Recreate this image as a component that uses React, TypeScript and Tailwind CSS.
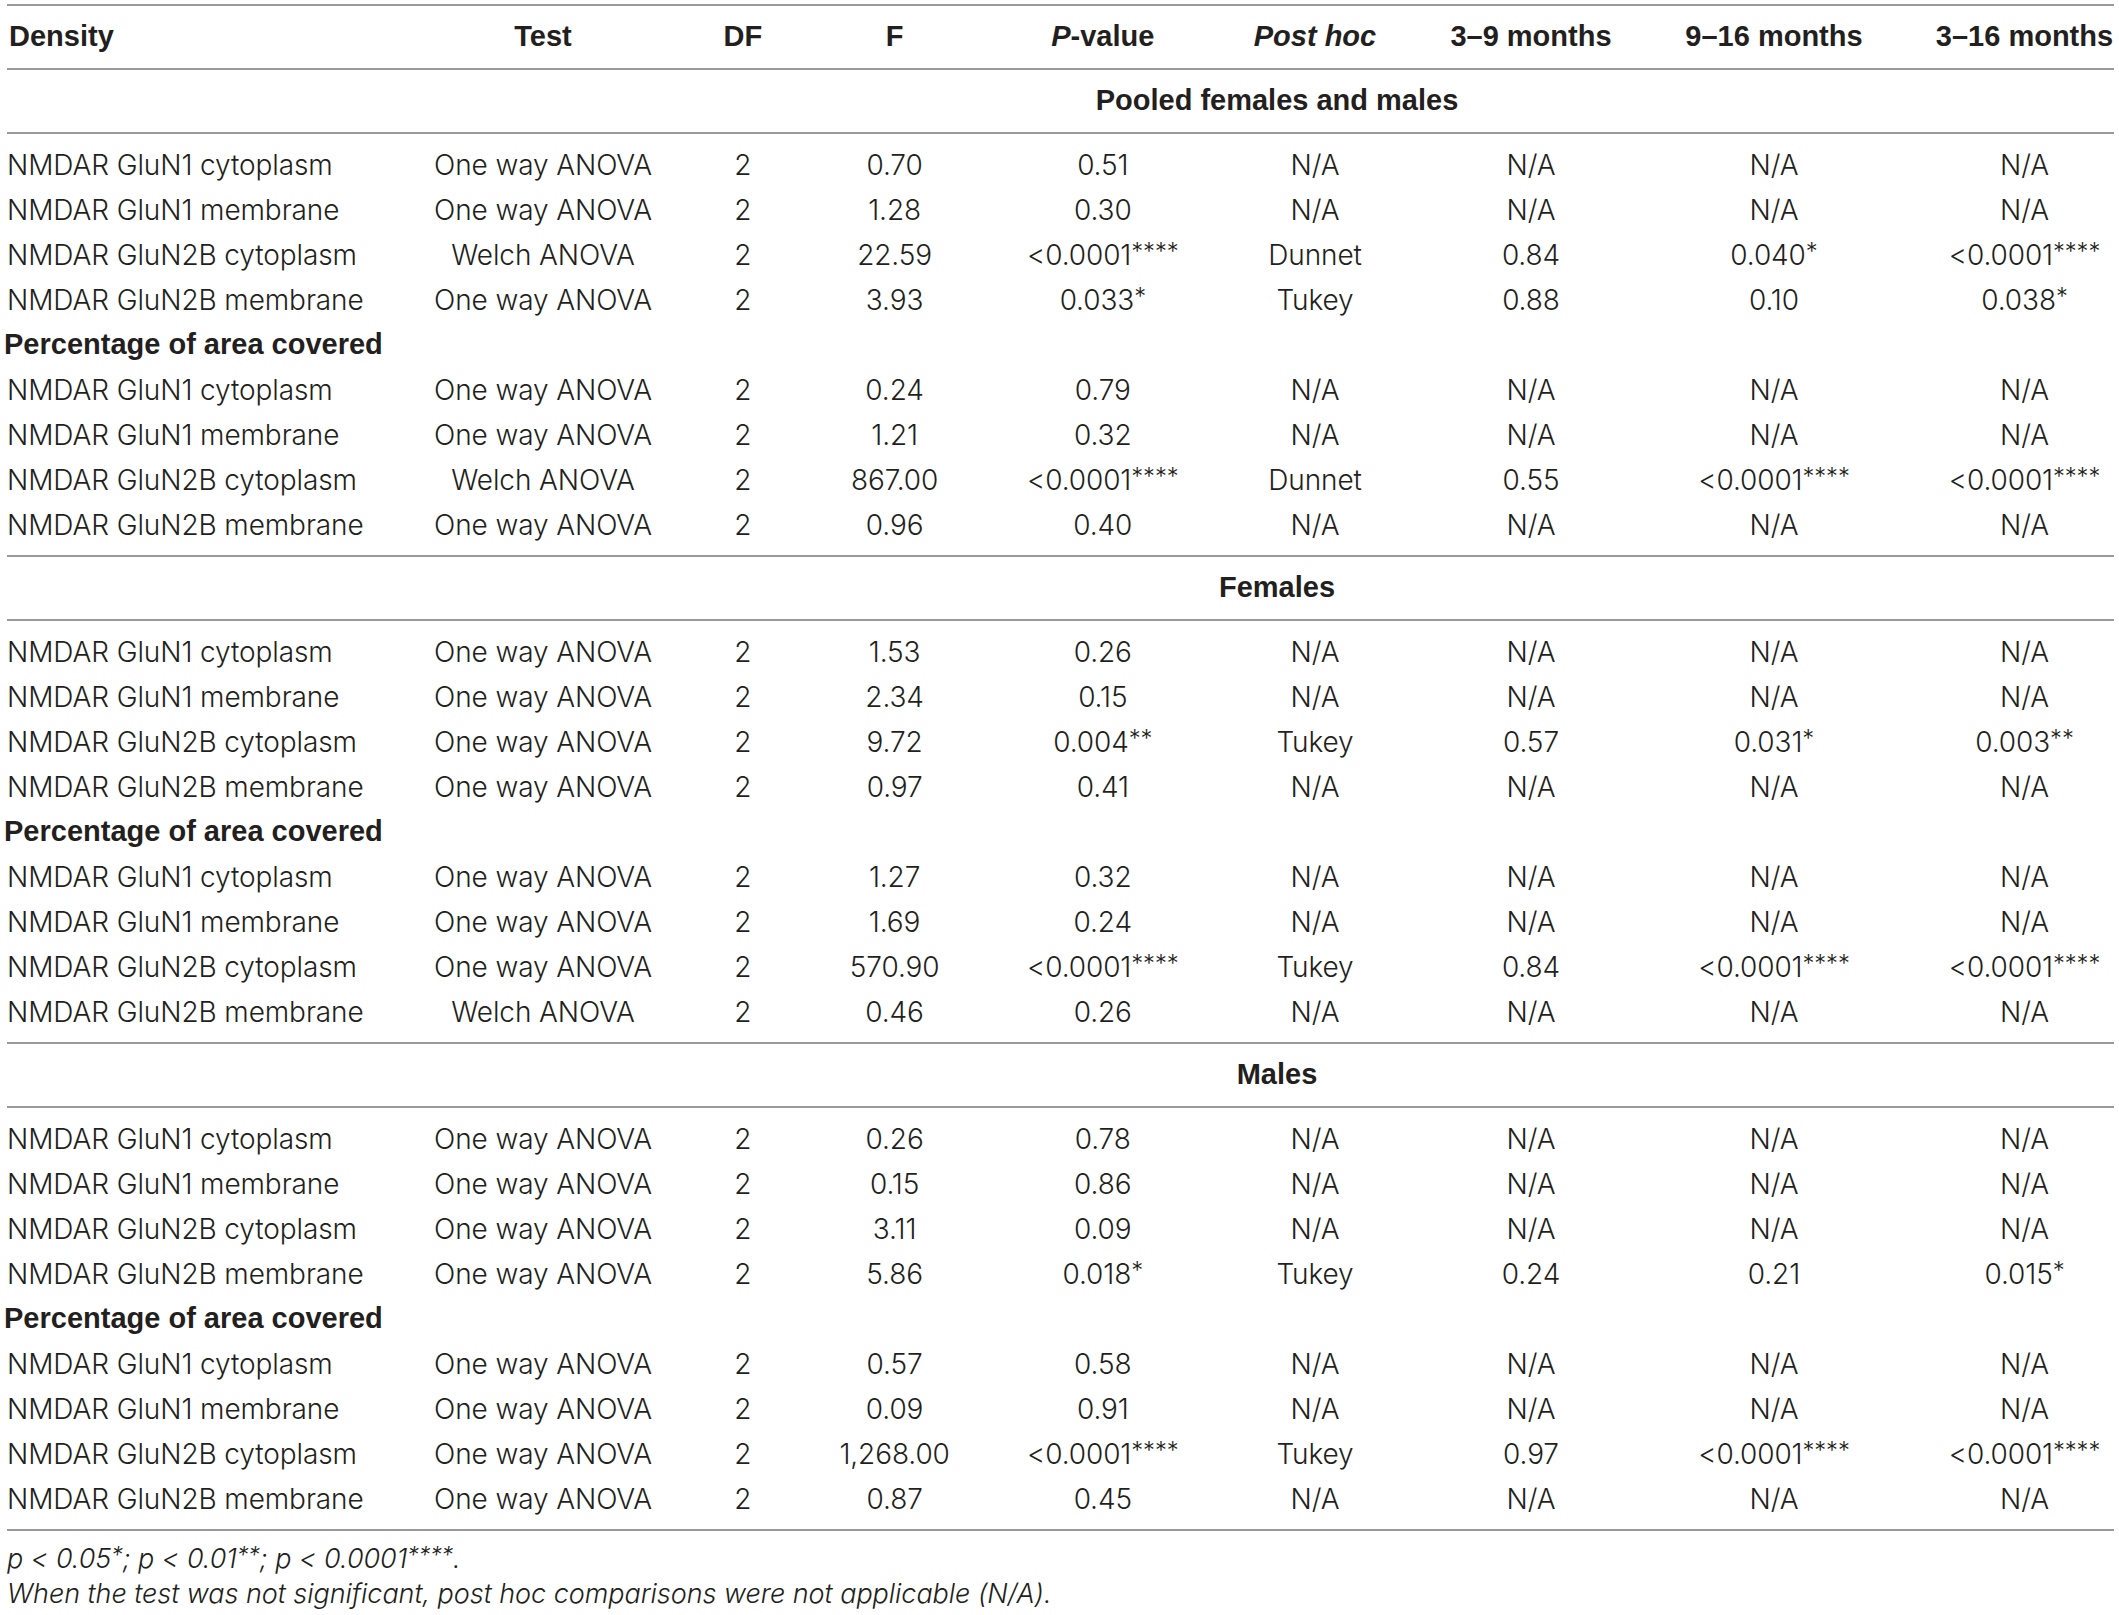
import React from "react";

type Row = string[];

const NA = ["N/A", "N/A", "N/A", "N/A"];

const sections: { title: string; density: Row[]; pct: Row[] }[] = [
  {
    title: "Pooled females and males",
    density: [
      ["NMDAR GluN1 cytoplasm", "One way ANOVA", "2", "0.70", "0.51", ...NA],
      ["NMDAR GluN1 membrane", "One way ANOVA", "2", "1.28", "0.30", ...NA],
      ["NMDAR GluN2B cytoplasm", "Welch ANOVA", "2", "22.59", "<0.0001****", "Dunnet", "0.84", "0.040*", "<0.0001****"],
      ["NMDAR GluN2B membrane", "One way ANOVA", "2", "3.93", "0.033*", "Tukey", "0.88", "0.10", "0.038*"],
    ],
    pct: [
      ["NMDAR GluN1 cytoplasm", "One way ANOVA", "2", "0.24", "0.79", ...NA],
      ["NMDAR GluN1 membrane", "One way ANOVA", "2", "1.21", "0.32", ...NA],
      ["NMDAR GluN2B cytoplasm", "Welch ANOVA", "2", "867.00", "<0.0001****", "Dunnet", "0.55", "<0.0001****", "<0.0001****"],
      ["NMDAR GluN2B membrane", "One way ANOVA", "2", "0.96", "0.40", ...NA],
    ],
  },
  {
    title: "Females",
    density: [
      ["NMDAR GluN1 cytoplasm", "One way ANOVA", "2", "1.53", "0.26", ...NA],
      ["NMDAR GluN1 membrane", "One way ANOVA", "2", "2.34", "0.15", ...NA],
      ["NMDAR GluN2B cytoplasm", "One way ANOVA", "2", "9.72", "0.004**", "Tukey", "0.57", "0.031*", "0.003**"],
      ["NMDAR GluN2B membrane", "One way ANOVA", "2", "0.97", "0.41", ...NA],
    ],
    pct: [
      ["NMDAR GluN1 cytoplasm", "One way ANOVA", "2", "1.27", "0.32", ...NA],
      ["NMDAR GluN1 membrane", "One way ANOVA", "2", "1.69", "0.24", ...NA],
      ["NMDAR GluN2B cytoplasm", "One way ANOVA", "2", "570.90", "<0.0001****", "Tukey", "0.84", "<0.0001****", "<0.0001****"],
      ["NMDAR GluN2B membrane", "Welch ANOVA", "2", "0.46", "0.26", ...NA],
    ],
  },
  {
    title: "Males",
    density: [
      ["NMDAR GluN1 cytoplasm", "One way ANOVA", "2", "0.26", "0.78", ...NA],
      ["NMDAR GluN1 membrane", "One way ANOVA", "2", "0.15", "0.86", ...NA],
      ["NMDAR GluN2B cytoplasm", "One way ANOVA", "2", "3.11", "0.09", ...NA],
      ["NMDAR GluN2B membrane", "One way ANOVA", "2", "5.86", "0.018*", "Tukey", "0.24", "0.21", "0.015*"],
    ],
    pct: [
      ["NMDAR GluN1 cytoplasm", "One way ANOVA", "2", "0.57", "0.58", ...NA],
      ["NMDAR GluN1 membrane", "One way ANOVA", "2", "0.09", "0.91", ...NA],
      ["NMDAR GluN2B cytoplasm", "One way ANOVA", "2", "1,268.00", "<0.0001****", "Tukey", "0.97", "<0.0001****", "<0.0001****"],
      ["NMDAR GluN2B membrane", "One way ANOVA", "2", "0.87", "0.45", ...NA],
    ],
  },
];

const GRID = "grid grid-cols-[358px_356px_43.6px_260px_156.4px_268px_164px_322px_179px]";

function Val({ v }: { v: string }) {
  const m = v.match(/^(.*?)(\*+)$/);
  if (!m) return <>{v}</>;
  return (
    <>
      {m[1]}
      <span className="relative -top-[0.2em] text-[0.85em]">{m[2]}</span>
    </>
  );
}

function DataRow({ row }: { row: Row }) {
  return (
    <div className={`${GRID} h-[45px] items-center`}>
      {row.map((c, i) =>
        i === 0 ? (
          <div key={i} className="whitespace-nowrap">
            {c}
          </div>
        ) : (
          <div key={i} className="flex justify-center whitespace-nowrap">
            <span>
              <Val v={c} />
            </span>
          </div>
        )
      )}
    </div>
  );
}

function Line() {
  return <div className="h-[2px] bg-[#9a9a9a]" />;
}

const BOLD = "font-['Liberation_Sans',Arial,sans-serif] font-bold text-[29px] tracking-normal";

export default function App() {
  const headers = ["Test", "DF", "F"];
  return (
    <div className="min-h-[1615px] bg-white pt-[4px] text-[#231f20] font-['Inter',sans-serif] font-light text-[28px] tracking-[-0.1px]">
      <div className="ml-[7px] w-[2107px]">
        <Line />
        <div className={`${GRID} h-[62px] items-center ${BOLD}`}>
          <div className="pl-[2px]">Density</div>
          {headers.map((h) => (
            <div key={h} className="flex justify-center whitespace-nowrap">{h}</div>
          ))}
          <div className="flex justify-center whitespace-nowrap">
            <span>
              <i>P</i>-value
            </span>
          </div>
          <div className="flex justify-center whitespace-nowrap">
            <i>Post hoc</i>
          </div>
          <div className="flex justify-center whitespace-nowrap">3–9 months</div>
          <div className="flex justify-center whitespace-nowrap">9–16 months</div>
          <div className="flex justify-center whitespace-nowrap">3–16 months</div>
        </div>
        <Line />
        {sections.map((s) => (
          <div key={s.title}>
            <div className={`flex h-[62px] items-center justify-center pl-[433px] ${BOLD}`}>{s.title}</div>
            <Line />
            <div className="py-[8px]">
              {s.density.map((r, i) => (
                <DataRow key={i} row={r} />
              ))}
              <div className={`flex h-[45px] items-center -ml-[3px] ${BOLD}`}>Percentage of area covered</div>
              {s.pct.map((r, i) => (
                <DataRow key={i} row={r} />
              ))}
            </div>
            <Line />
          </div>
        ))}
        <div className="pt-[11px] italic text-[27px] tracking-[-0.05px] leading-[34px]">
          <div>
            p &lt; 0.05<Val v="*" />; p &lt; 0.01<Val v="**" />; p &lt; 0.0001<Val v="****" />.
          </div>
          <div>When the test was not significant, post hoc comparisons were not applicable (N/A).</div>
        </div>
      </div>
    </div>
  );
}
